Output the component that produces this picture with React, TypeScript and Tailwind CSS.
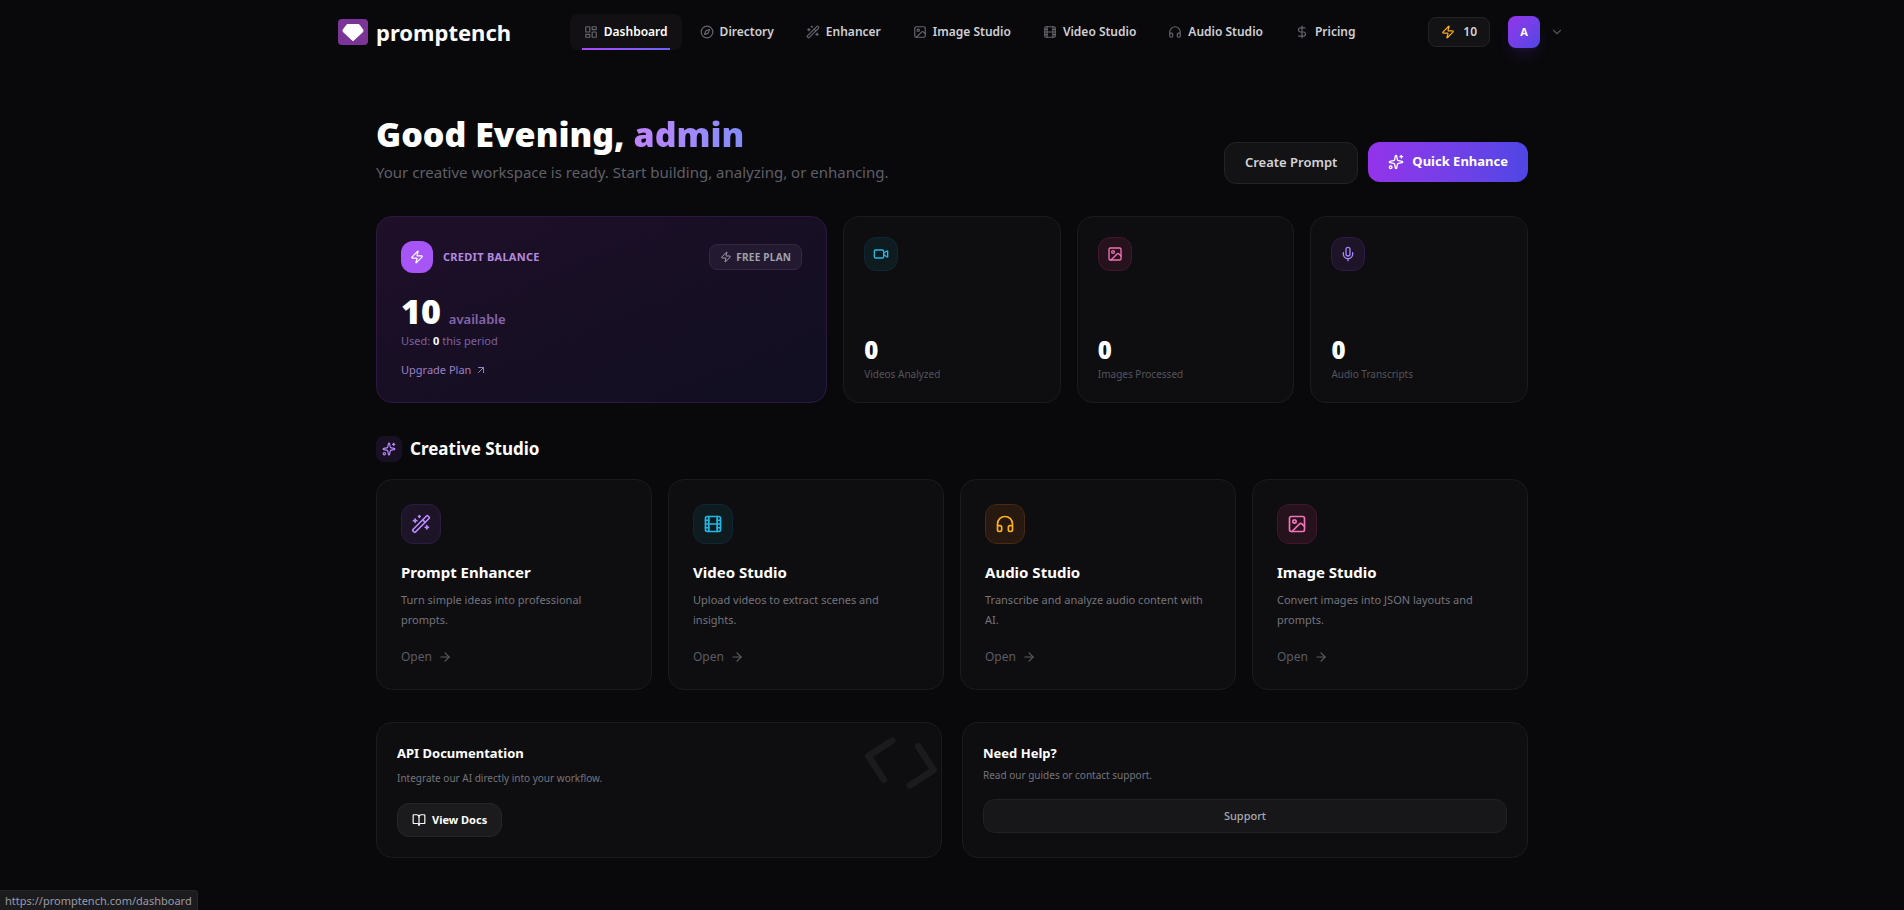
import type { ReactNode } from "react";
import {
  ArrowRight,
  ArrowUpRight,
  BookOpen,
  ChevronDown,
  Code,
  Compass,
  DollarSign,
  Film,
  Headphones,
  Image as ImageIcon,
  LayoutDashboard,
  Mic,
  Sparkles,
  Video,
  WandSparkles,
  Zap,
} from "lucide-react";
import type { LucideIcon } from "lucide-react";

const navItems: { label: string; icon: LucideIcon; active?: boolean }[] = [
  { label: "Dashboard", icon: LayoutDashboard, active: true },
  { label: "Directory", icon: Compass },
  { label: "Enhancer", icon: WandSparkles },
  { label: "Image Studio", icon: ImageIcon },
  { label: "Video Studio", icon: Film },
  { label: "Audio Studio", icon: Headphones },
  { label: "Pricing", icon: DollarSign },
];

const stats: { label: string; value: number; icon: LucideIcon; tone: string }[] = [
  { label: "Videos Analyzed", value: 0, icon: Video, tone: "bg-[#0e1c20] border-[#0d2638] text-[#22b8e6]" },
  { label: "Images Processed", value: 0, icon: ImageIcon, tone: "bg-[#25121d] border-[#42172c] text-[#f472b6]" },
  { label: "Audio Transcripts", value: 0, icon: Mic, tone: "bg-[#1d1527] border-[#2d1b46] text-[#a684ff]" },
];

const tools: { title: string; text: string; icon: LucideIcon; tone: string }[] = [
  {
    title: "Prompt Enhancer",
    text: "Turn simple ideas into professional prompts.",
    icon: WandSparkles,
    tone: "bg-[#1d1527] border-[#2d1b46] text-[#b98aff]",
  },
  {
    title: "Video Studio",
    text: "Upload videos to extract scenes and insights.",
    icon: Film,
    tone: "bg-[#0e1c20] border-[#0d2638] text-[#22b8e6]",
  },
  {
    title: "Audio Studio",
    text: "Transcribe and analyze audio content with AI.",
    icon: Headphones,
    tone: "bg-[#271910] border-[#4a2a12] text-[#fbb01e]",
  },
  {
    title: "Image Studio",
    text: "Convert images into JSON layouts and prompts.",
    icon: ImageIcon,
    tone: "bg-[#25121d] border-[#42172c] text-[#f472b6]",
  },
];

function Card({ className, children }: { className: string; children: ReactNode }) {
  return <div className={`rounded-2xl border border-[#1b1b1d] bg-[#0e0e10] ${className}`}>{children}</div>;
}

function Logo() {
  return (
    <a href="#" className="flex items-center gap-2 pl-0.5 text-white">
      <svg viewBox="0 0 30 26" className="h-[26px] w-[30px]" aria-hidden="true">
        <rect width="30" height="26" rx="4" fill="#7b3596" />
        <path
          d="M9 5.500h12l4 5.500v1.500L15.500 21.500h-1L5 12.500V11z"
          fill="#fff"
          stroke="#fff"
          strokeLinejoin="round"
        />
      </svg>
      <span className="text-[22px] leading-8 font-bold">promptench</span>
    </a>
  );
}

function Header() {
  return (
    <header className="mx-auto flex h-16 w-full max-w-7xl items-center justify-between px-6">
      <Logo />
      <nav className="flex items-center gap-1">
        {navItems.map(({ label, icon: Icon, active }) => (
          <a
            key={label}
            href="#"
            className={`relative flex h-9 items-center gap-1.5 rounded-lg px-3.5 text-[12px] font-semibold ${
              active ? "bg-[#121013] text-white" : "text-[#d0d0d4]"
            }`}
          >
            <Icon size={14} className="text-[#65656d]" />
            {label}
            {active && (
              <span className="absolute inset-x-3 bottom-0 h-0.5 bg-linear-to-r from-[#ad46ff] to-[#6b63f5]" />
            )}
          </a>
        ))}
      </nav>
      <div className="flex items-center pr-1">
        <button className="mr-[18px] flex h-[30px] items-center gap-2 rounded-lg border border-[#232325] bg-[#131315] px-3 text-[12px] font-semibold text-[#d4d4d8]">
          <Zap size={14} className="text-[#fbb01e]" />
          10
        </button>
        <button className="flex items-center gap-2.5" aria-label="Account menu">
          <span className="flex size-8 items-center justify-center rounded-lg bg-linear-to-br from-[#9333ea] to-[#4f46e5] text-[11px] font-bold text-white shadow-lg shadow-[#7c3aed]/15">
            A
          </span>
          <ChevronDown size={14} className="text-[#52525b]" />
        </button>
      </div>
    </header>
  );
}

function Greeting() {
  return (
    <section className="flex items-end justify-between">
      <div>
        <h1 className="text-[34px] leading-10 font-black text-white">
          Good Evening,{" "}
          <span className="bg-linear-to-r from-[#c084fc] to-[#818cf8] bg-clip-text text-transparent">admin</span>
        </h1>
        <p className="mt-1.5 text-[15px] leading-6 text-[#5f5f67]">
          Your creative workspace is ready. Start building, analyzing, or enhancing.
        </p>
      </div>
      <div className="flex items-start gap-2.5">
        <button className="h-[42px] rounded-xl border border-[#232325] bg-[#131315] px-5 text-[13px] font-semibold text-[#d4d4d8]">
          Create Prompt
        </button>
        <button className="flex h-10 items-center gap-2 rounded-xl bg-linear-to-r from-[#9333ea] to-[#4f46e5] px-5 text-[13px] font-bold text-white">
          <Sparkles size={16} />
          Quick Enhance
        </button>
      </div>
    </section>
  );
}

function CreditCard() {
  return (
    <div className="col-span-2 rounded-2xl border border-[#2b1942] bg-linear-to-br from-[#1f0f29] via-[#170f24] to-[#110f22] p-6">
      <div className="flex items-center justify-between">
        <div className="flex items-center gap-2.5">
          <span className="flex size-8 items-center justify-center rounded-xl bg-[#a855f7] text-white">
            <Zap size={14} />
          </span>
          <span className="text-[11px] font-bold tracking-wide text-[#b48ae0]">CREDIT BALANCE</span>
        </div>
        <span className="flex h-[26px] items-center gap-1 rounded-lg border border-[#33293f] bg-[#231a31] px-2.5 text-[10px] font-bold tracking-wide text-[#a1a1aa]">
          <Zap size={12} />
          FREE PLAN
        </span>
      </div>
      <p className="mt-5 flex items-baseline gap-2">
        <span className="text-[34px] leading-9 font-black text-white">10</span>
        <span className="text-[13px] leading-4 font-semibold text-[#8565ac]">available</span>
      </p>
      <p className="mt-1 text-[11px] leading-4 text-[#7d60a2]">
        Used: <span className="font-bold text-white">0</span> this period
      </p>
      <a href="#" className="mt-[13px] flex items-center gap-1 text-[11px] leading-4 text-[#9c80c4]">
        Upgrade Plan
        <ArrowUpRight size={12} />
      </a>
    </div>
  );
}

function Overview() {
  return (
    <section className="mt-8 grid grid-cols-5 gap-4">
      <CreditCard />
      {stats.map(({ label, value, icon: Icon, tone }) => (
        <Card key={label} className="flex flex-col items-start justify-between p-5">
          <span className={`rounded-xl border p-2 ${tone}`}>
            <Icon size={16} />
          </span>
          <div>
            <p className="text-[24px] leading-8 font-black text-white">{value}</p>
            <p className="text-[10px] leading-4 text-[#54545c]">{label}</p>
          </div>
        </Card>
      ))}
    </section>
  );
}

function CreativeStudio() {
  return (
    <section className="mt-8">
      <h2 className="flex items-center gap-2 text-[17px] leading-7 font-bold text-white">
        <span className="rounded-lg bg-[#1a1024] p-1.5 text-[#b98aff]">
          <Sparkles size={14} />
        </span>
        Creative Studio
      </h2>
      <div className="mt-4 grid grid-cols-4 gap-4">
        {tools.map(({ title, text, icon: Icon, tone }) => (
          <Card key={title} className="p-6">
            <span className={`flex size-10 items-center justify-center rounded-xl border ${tone}`}>
              <Icon size={20} />
            </span>
            <h3 className="mt-4 text-[15px] leading-6 font-bold text-white">{title}</h3>
            <p className="mt-1.5 text-[11px] leading-5 text-[#74747c]">{text}</p>
            <a href="#" className="mt-[19px] flex items-center gap-1.5 text-[12px] leading-4 text-[#5b5b63]">
              Open
              <ArrowRight size={14} />
            </a>
          </Card>
        ))}
      </div>
    </section>
  );
}

function Resources() {
  return (
    <section className="mt-8 grid grid-cols-2 gap-5">
      <Card className="relative overflow-hidden p-5">
        <Code size={80} className="absolute top-0 right-0 rotate-12 text-[#1b1b1d]" />
        <h3 className="text-[13px] leading-5 font-bold text-white">API Documentation</h3>
        <p className="mt-1.5 text-[10px] leading-[18px] text-[#74747c]">
          Integrate our AI directly into your workflow.
        </p>
        <button className="mt-4 flex h-[34px] items-center gap-1.5 rounded-xl border border-[#262628] bg-[#1b1b1d] px-3.5 text-[11px] font-bold text-white">
          <BookOpen size={14} />
          View Docs
        </button>
      </Card>
      <Card className="p-5">
        <h3 className="text-[13px] leading-5 font-bold text-white">Need Help?</h3>
        <p className="mt-1 text-[10px] leading-4 text-[#74747c]">Read our guides or contact support.</p>
        <button className="mt-4 h-[34px] w-full rounded-xl border border-[#222224] bg-[#171719] text-[11px] font-medium text-[#a8a8b0]">
          Support
        </button>
      </Card>
    </section>
  );
}

export default function App() {
  return (
    <div className="min-h-screen bg-[#09090b] font-['Noto_Sans',sans-serif]">
      <Header />
      <main className="mx-auto max-w-6xl pt-[50px] pb-[52px]">
        <Greeting />
        <Overview />
        <CreativeStudio />
        <Resources />
      </main>
      <div className="fixed bottom-0 left-0 rounded-tr border-t border-r border-[#252527] bg-[#1c1c1e] px-[5px] text-[11px] leading-[19px] text-[#9a9aa6]">
        https://promptench.com/dashboard
      </div>
    </div>
  );
}
